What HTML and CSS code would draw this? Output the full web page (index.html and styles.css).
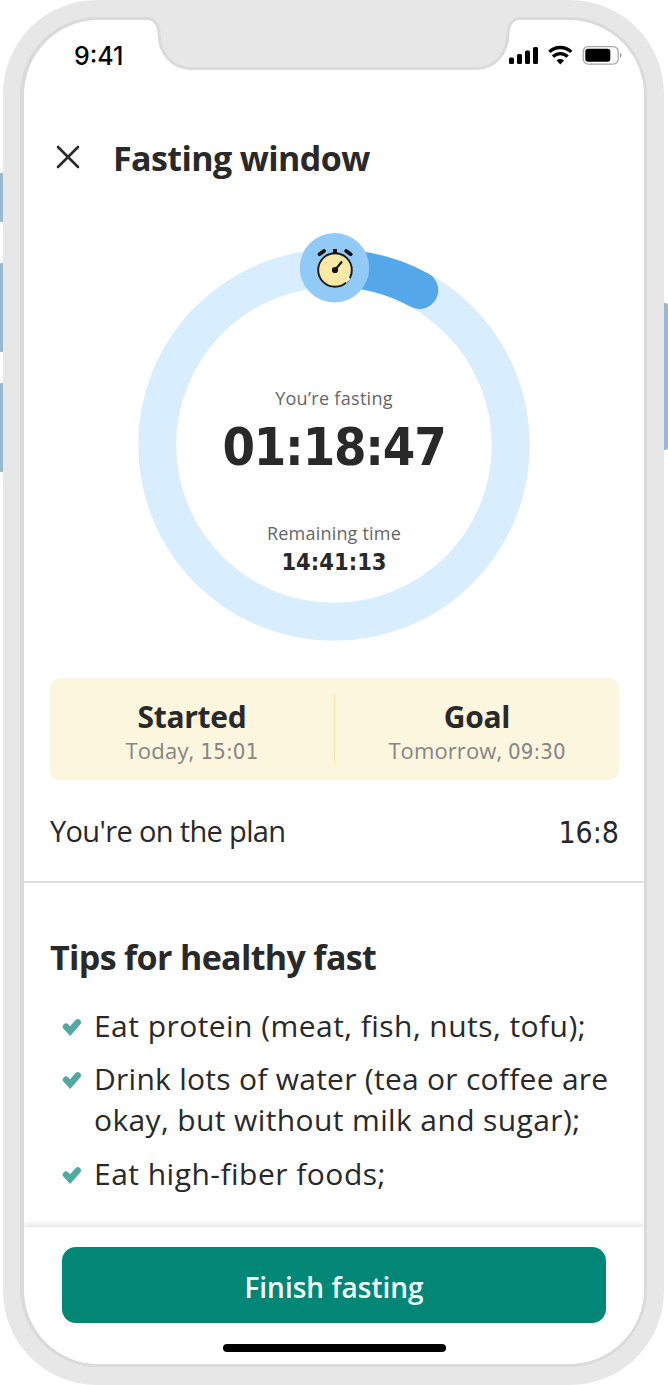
FILE: index.html
```html
<!DOCTYPE html>
<html lang="en">
<head>
<meta charset="utf-8">
<title>Fasting window</title>
<link rel="stylesheet" href="styles.css">
</head>
<body>
<div class="stage">
  <span class="side side-a"></span><span class="side side-b"></span><span class="side side-c"></span><span class="side side-d"></span>
  <div class="phone">
    <main class="screen">
      <div class="status">
        <span class="clock">9:41</span>
        <svg class="signals" width="116" height="22" viewBox="0 0 116 22">
          <rect x="1" y="12.500" width="5" height="6.500" rx="1.500"/><rect x="9" y="9" width="5" height="10" rx="1.500"/><rect x="17" y="5.500" width="5" height="13.500" rx="1.500"/><rect x="25" y="2" width="5" height="17" rx="1.500"/>
          <path d="M41.300 6.900a16 16 0 0 1 22 0M45 11.600a10.300 10.300 0 0 1 14.600 0" fill="none" stroke="#000" stroke-width="3.300"/>
          <path d="M48.600 15.500a5.500 5.500 0 0 1 7.400 0L52.300 19.500Z"/>
          <rect x="75.200" y="1.600" width="35" height="17.500" rx="5" fill="none" stroke="#a6a6a6" stroke-width="1.300"/>
          <rect x="77.300" y="3.800" width="25" height="13" rx="2.700"/>
          <path d="M112 7.800q3 2.600 0 5.200Z" fill="#999"/>
        </svg>
      </div>
      <header class="header">
        <svg class="close" width="24" height="24" viewBox="0 0 24 24"><path d="M2 2L22 22M22 2L2 22"/></svg>
        <h1 class="title">Fasting window</h1>
      </header>
      <section class="dial">
        <svg class="ring" width="392" height="410" viewBox="0 0 392 410">
          <circle cx="196" cy="213" r="176.800" fill="none" stroke="#d8edfd" stroke-width="38"/>
          <path d="M196 36.200A176.800 176.800 0 0 1 281.500 58.200" fill="none" stroke="#54a7e8" stroke-width="37.500" stroke-linecap="round"/>
          <circle cx="196.500" cy="35.700" r="34.700" fill="#91c9f7"/>
          <circle cx="197" cy="38" r="16.800" fill="#fae9a5" stroke="#1c1c1c" stroke-width="1.900"/>
          <path d="M181.500 22.200l4.500-3.200M212.700 22.200l-4.500-3.200" stroke="#111" stroke-width="3.800" stroke-linecap="round"/>
          <path d="M197 21.500v-4.500" stroke="#111" stroke-width="4"/>
          <path d="M197 38l7-8.500" stroke="#111" stroke-width="2"/>
          <circle cx="197" cy="38" r="3.100" fill="#111"/>
          <path d="M207.500 50l4-4" stroke="#fff0d8" stroke-width="2.500"/>
        </svg>
        <div class="readout">
          <div class="caption cap-a">You’re fasting</div>
          <div class="elapsed">01:18:47</div>
          <div class="caption cap-b">Remaining time</div>
          <div class="remaining">14:41:13</div>
        </div>
      </section>
      <section class="times">
        <div class="time"><strong class="name name-a">Started</strong><span class="when when-a">Today, <span class="num">15:01</span></span></div>
        <div class="split"></div>
        <div class="time"><strong class="name name-b">Goal</strong><span class="when when-b">Tomorrow, <span class="num">09:30</span></span></div>
      </section>
      <div class="plan"><span class="plan-label">You're on the plan</span><span class="plan-value num">16:8</span></div>
      <section class="tips">
        <h2 class="tips-title">Tips for healthy fast</h2>
        <ul class="list">
          <li class="tip"><svg class="check" width="20" height="20" viewBox="0 0 20 20"><path d="M4 9.700L8.100 14.200L15.800 5.300"/></svg><span><span class="line l1">Eat protein (meat, fish, nuts, tofu);</span></span></li>
          <li class="tip"><svg class="check" width="20" height="20" viewBox="0 0 20 20"><path d="M4 9.700L8.100 14.200L15.800 5.300"/></svg><span><span class="line l2">Drink lots of water (tea or coffee are</span><span class="line l3">okay, but without milk and sugar);</span></span></li>
          <li class="tip"><svg class="check" width="20" height="20" viewBox="0 0 20 20"><path d="M4 9.700L8.100 14.200L15.800 5.300"/></svg><span><span class="line l4">Eat high-fiber foods;</span></span></li>
        </ul>
      </section>
      <footer class="footer"><button class="finish">Finish fasting</button><div class="home"></div></footer>
    </main>
    <svg class="notch" width="380" height="74" viewBox="0 0 380 74">
      <path d="M0 0V18.500H4C12 20 15 26 15 33C15 53 28 68.500 47 68.500H332C351 68.500 364 53 364 33C364 26 367 20 375 18.500H380V0Z" fill="#e7e7e7"/>
      <path d="M0 18.500H3C11 18.500 15 26 15 33C15 53 28 68.500 47 68.500H332C351 68.500 364 53 364 33C364 26 368 18.500 376 18.500H380" fill="none" stroke="#dadada" stroke-width="3"/>
    </svg>
  </div>
</div>
</body>
</html>
```
FILE: styles.css
```css
* { box-sizing: border-box; }
body { margin: 0; background: #fff; font-family: "Open Sans", "Noto Sans", sans-serif; color: #292929; }
.stage { position: relative; width: 668px; height: 1385px; overflow: hidden; padding-left: 3px; }
.side { position: absolute; width: 8px; background: #96b9d0; border-radius: 3px; }
.side-a { left: -1px; top: 173px; height: 49px; }
.side-b { left: -1px; top: 263px; height: 89px; }
.side-c { left: -1px; top: 383px; height: 89px; }
.side-d { left: 660px; top: 303px; height: 147px; }
.phone { position: relative; width: 661px; height: 1385px; padding: 17px 17px 18px; background: #e7e7e7; border-radius: 94px; }
.screen { width: 627px; height: 1350px; border: 3px solid #dadada; border-left-width: 4px; border-radius: 78px; background: #fff; overflow: hidden; display: flex; flex-direction: column; }
.notch { position: absolute; left: 141px; top: 0; }
.status { height: 100px; padding: 22px 20px 0 50px; display: flex; justify-content: space-between; align-items: flex-start; flex: none; }
.clock { font: 500 25px/28px Inter, sans-serif; color: #000; }
.signals { display: block; margin-top: 3px; }
.header { height: 74px; padding: 0 32px; display: flex; align-items: center; gap: 33px; flex: none; }
.close path { fill: none; stroke: #292929; stroke-width: 2.6; stroke-linecap: round; }
.title { margin: 1px 0 0; font-size: 34px; line-height: 44px; font-weight: 700; letter-spacing: -0.6px; white-space: nowrap; }
.dial { height: 465px; display: grid; justify-items: center; flex: none; margin-top: 38px; }
.dial > * { grid-area: 1 / 1; }
.readout { display: flex; flex-direction: column; align-items: center; padding-top: 153px; white-space: nowrap; }
.caption { font-size: 18px; line-height: 26px; color: #666; }
.cap-a { letter-spacing: 0.3px; }
.cap-b { letter-spacing: 0.2px; position: relative; top: -1px; }
.elapsed { font: 700 52px/66px "DejaVu Sans Condensed", "DejaVu Sans", sans-serif; letter-spacing: -1.2px; margin: 3px 0 41px; }
.remaining { font: 700 23.5px/30px "DejaVu Sans Condensed", "DejaVu Sans", sans-serif; }
.times { height: 102px; margin: -19px 25px 0 26px; padding-top: 6px; border-radius: 10px; background: #fdf6df; display: flex; align-items: center; flex: none; }
.num { font-family: "DejaVu Sans Condensed", "DejaVu Sans", sans-serif; }
.time { flex: 1; display: flex; flex-direction: column; align-items: center; white-space: nowrap; }
.split { width: 1px; height: 70px; margin-bottom: 5px; background: #fbe9ac; }
.name { font-size: 30px; line-height: 37px; letter-spacing: -0.3px; }
.when { font-size: 22px; line-height: 31px; color: #858585; letter-spacing: 0.2px; }
.when-b { letter-spacing: 0.1px; }
.plan { height: 103px; padding: 0 25px 0 26px; border-bottom: 2px solid #dedede; display: flex; justify-content: space-between; align-items: center; font-size: 29px; flex: none; white-space: nowrap; }
.plan-label { letter-spacing: -0.65px; }
.plan-value { font-size: 30px; padding-top: 3px; }
.tips { padding: 50px 26px 0; flex: 1; }
.tips-title { margin: 0 0 24px; font-size: 34px; line-height: 48px; letter-spacing: -0.65px; white-space: nowrap; }
.list { margin: 0; padding: 0 0 0 12px; list-style: none; display: flex; flex-direction: column; gap: 12px; }
.tip { display: flex; gap: 12px; font-size: 30px; line-height: 41px; }
.tip:last-child { margin-top: 1px; }
.line { display: block; white-space: nowrap; }
.l1 { letter-spacing: 0.45px; }
.l2 { letter-spacing: 0.27px; }
.l3 { letter-spacing: 0.38px; }
.l4 { letter-spacing: 0.48px; }
.check { flex: none; margin-top: 12px; }
.check path { fill: none; stroke: #50aaa2; stroke-width: 6.4; stroke-linecap: round; }
.footer { height: 137px; padding: 20px 38px 0; box-shadow: 0 -2px 6px #ddd; background: #fff; display: flex; flex-direction: column; align-items: center; flex: none; }
.finish { width: 100%; height: 76px; border: 0; border-radius: 14px; background: #028676; color: #f2ffff; font: 600 28px/40px "Open Sans", sans-serif; padding: 3px 0 0; }
.home { width: 223px; height: 8px; border-radius: 4px; background: #000; margin-top: 21px; }
```
